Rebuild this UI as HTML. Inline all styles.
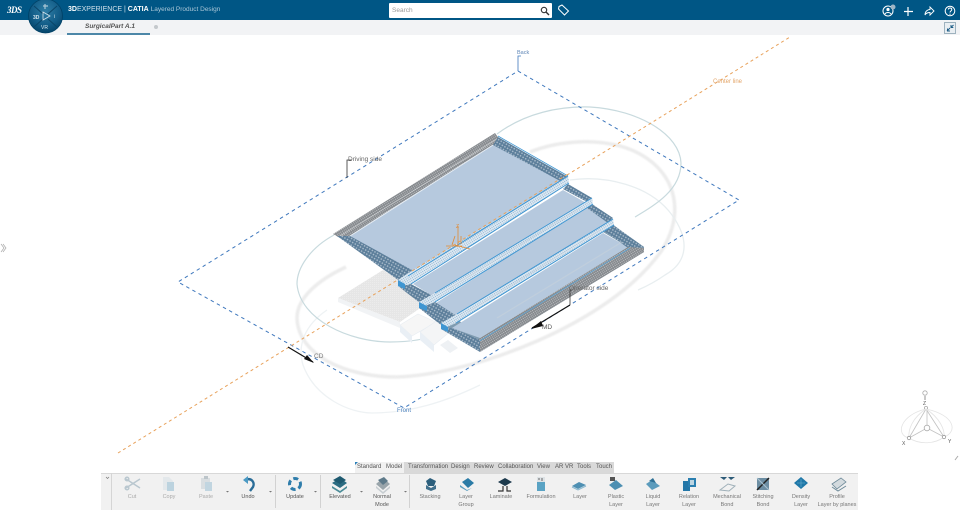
<!DOCTYPE html>
<html><head><meta charset="utf-8"><style>
html,body{margin:0;padding:0;width:960px;height:510px;overflow:hidden;background:#fff;font-family:"Liberation Sans",sans-serif}
.abs{position:absolute}
#top{left:0;top:0;width:960px;height:20px;background:#005685}
#tabs{left:0;top:20px;width:960px;height:15px;background:#f2f3f5}
#tb{left:101px;top:473px;width:757px;height:37px;background:#f1f1f1;border-top:1px solid #d8d8d8;box-sizing:border-box}
.l{position:absolute;font-size:5.5px;color:#777;text-align:center;line-height:7.5px;white-space:nowrap;transform:translateX(-50%)}
.d{color:#555}
.sep{position:absolute;top:475px;width:1px;height:33px;background:#d2d2d2}
.tab{position:absolute;top:462px;height:11px;font-size:6px;line-height:11px;color:#555;text-align:center}
</style></head><body>
<svg class="abs" style="left:0;top:0" width="960" height="510" viewBox="0 0 960 510">
<defs>
<pattern id="m1" width="3" height="3" patternUnits="userSpaceOnUse" patternTransform="rotate(30)"><rect width="3" height="3" fill="#5d7f9b"/><rect width="1.4" height="1.4" fill="#aebfce"/></pattern>
<pattern id="m2" width="2" height="2" patternUnits="userSpaceOnUse" patternTransform="rotate(-31)"><rect width="2" height="2" fill="#85898d"/><rect width="1" height="1" fill="#bfc1c4"/></pattern>
<pattern id="m3" width="2" height="2" patternUnits="userSpaceOnUse" patternTransform="rotate(-31)"><rect width="2" height="2" fill="#dfeaf3"/><rect width="1" height="1" fill="#8fb3d0"/></pattern>
<pattern id="g1" width="2" height="2" patternUnits="userSpaceOnUse"><rect width="2" height="2" fill="#e6e6e6"/><rect width="1" height="1" fill="#ececec"/></pattern>
<filter id="b"><feGaussianBlur stdDeviation=".7"/></filter>
<filter id="b2"><feGaussianBlur stdDeviation=".35"/></filter>
</defs>
<g fill="none">
<!-- gray ring -->
<path d="M346 267C318 280 297 298 297 318C298 355 345 377 397 377C470 375 610 325 662 250C690 205 670 160 620 146C590 138 555 142 530 152" stroke="#ececec" stroke-width="3.5" filter="url(#b)"/>
<!-- pale rings -->
<path d="M327 310C305 325 297 345 303 365C315 398 350 413 372 413C410 413 445 402 480 385" stroke="#eef2f4" stroke-width="1.3" filter="url(#b2)"/>
<path d="M570 180C605 175 650 185 672 215C690 240 688 262 665 275C655 282 645 287 638 290" stroke="#e8eef0" stroke-width="1.3" filter="url(#b2)"/>
<!-- blue ring -->
<path d="M497 134C525 113 560 106 590 107C640 110 680 135 681 163C681 190 655 205 635 217" stroke="#c8dade" stroke-width="1.2" filter="url(#b2)"/>
<path d="M334 235C310 248 297 268 297 284C300 320 350 342 390 342C410 342 428 339 442 333" stroke="#c8dade" stroke-width="1.2" filter="url(#b2)"/>
<!-- dashed -->
<path d="M518 71L739 200L404 408L178 282Z" stroke="#3f78bd" stroke-width="1" stroke-dasharray="3.5 3.5"/>
</g>
<!-- ghost -->
<g filter="url(#b2)">
<polygon points="338,298 383,270 432,300 400,322" fill="url(#g1)"/>
<polygon points="338,298 400,322 400,328 338,302" fill="#f1f3f5"/>
<polygon points="400,325 418,314 436,322 412,336" fill="#f6f6f6" stroke="#e8edf2" stroke-width=".6"/>
<polygon points="400,325 412,336 412,343 400,332" fill="#e9eff5"/>
<polygon points="420,332 438,320 452,330 434,345" fill="#f4f5f6" stroke="#e8edf2" stroke-width=".6"/>
<polygon points="420,332 434,345 434,352 420,340" fill="#e9eff5"/>
<polygon points="440,345 448,340 458,348 450,353" fill="#eef1f4"/>
</g>
<path d="M118 453L790 37" fill="none" stroke="#e8a25c" stroke-width="1" stroke-dasharray="3 3"/>
<!-- plates -->
<g>
<!-- plate 4 -->
<polygon points="444,326 456,318 480,338 628,247 603,232 612,226 644,247 644,252 480,352 478,350" fill="#7f9bb0"/>
<polygon points="452,328 603,233 628,247 480,338" fill="#b6c9de"/>
<polygon points="603,230 612,224 644,247 628,248" fill="url(#m1)"/>
<polygon points="477,340 628,247 644,248 644,252 480,352" fill="url(#m2)"/>
<path d="M478 342L630 248" stroke="#5fa5d5" stroke-width=".8"/>
<polygon points="441,329 452,328 480,340 480,352" fill="url(#m1)"/>
<!-- band 3 + plate 3 -->
<polygon points="436,303 587,206 610,221 457,316" fill="#b6c9de"/>
<polygon points="592,204 613,218 608,223 587,208" fill="url(#m1)"/>
<polygon points="419,308 435,302 457,316 441,325" fill="url(#m1)"/>
<polygon points="441,323 457,314 613,219 614,225 456,323 441,330" fill="url(#m3)"/>
<path d="M456 323L614 225M457 314L613 219" stroke="#3f96d2" stroke-width="1"/>
<polygon points="441,323 448,327 448,332 441,329" fill="#3f96d2"/>
<!-- band 2 + plate 2 -->
<polygon points="413,284 563,190 590,205 436,298" fill="#b6c9de"/>
<polygon points="568,184 592,198 587,202 563,189" fill="url(#m1)"/>
<polygon points="398,286 411,284 435,297 420,303" fill="url(#m1)"/>
<polygon points="419,302 435,293 592,198 593,204 435,302 419,308" fill="url(#m3)"/>
<path d="M435 302L593 204M435 293L592 198" stroke="#3f96d2" stroke-width="1"/>
<polygon points="419,302 427,306 427,311 419,308" fill="#3f96d2"/>
<!-- plate 1 -->
<polygon points="350,236 493,145 568,182 412,274" fill="#b6c9de"/>
<polygon points="333,234 495,133 500,140 493,145 350,236 340,238" fill="url(#m2)"/>
<path d="M350 236L493 145" stroke="#e6edf4" stroke-width="1"/>
<path d="M340 236L497 139" stroke="#d5d8da" stroke-width=".6"/>
<polygon points="498,137 568,177 562,182 493,145" fill="url(#m1)"/>
<path d="M498 136L568 176" stroke="#3f96d2" stroke-width=".8"/>
<polygon points="337,236 350,236 412,270 406,280 398,280" fill="url(#m1)"/>
<polygon points="398,280 408,273 568,176 569,183 411,284 398,287" fill="url(#m3)"/>
<path d="M411 284L569 183M408 276L568 176" stroke="#3f96d2" stroke-width="1"/>
<polygon points="398,280 405,284 405,289 398,286" fill="#3f96d2"/>
<path d="M445 291L580 208M468 312L600 230M497 318L622 242" stroke="#c7d2dc" stroke-width="1.2" opacity=".6"/>
</g>
<g fill="none">
<path d="M412 271L568 174" stroke="#e8a25c" stroke-width="1" stroke-dasharray="3 3"/>
<path d="M458 247V226M461 244V236M455 245L470 249M446 246H462M452 245L455 236" stroke="#e08a35" stroke-width=".8"/>
<path d="M347 178V160H352M570 305V290H572" stroke="#333" stroke-width=".8"/>
<path d="M518 71V56H521" stroke="#3f78bd" stroke-width=".8"/>
<path d="M570 305L532 328" stroke="#111" stroke-width="1.2"/>
<path d="M288 347L313 362" stroke="#111" stroke-width="1.2"/>
</g>
<polygon points="531,329 541,321 543,326" fill="#111"/>
<polygon points="314,363 304,359 307,355" fill="#111"/>
<path d="M1 244L4 248L1 252M3 244L6 248L3 252" fill="none" stroke="#aaa" stroke-width=".7"/>
<text x="348" y="161" font-size="6.5" fill="#666">Driving side</text>
<text x="517" y="54" font-size="5.5" fill="#5f86b6">Back</text>
<text x="713" y="83" font-size="6" fill="#e3a569">Center line</text>
<text x="569" y="290" font-size="6.5" fill="#666">Operator side</text>
<text x="542" y="329" font-size="6.5" fill="#555">MD</text>
<text x="314" y="358" font-size="6.5" fill="#777">CD</text>
<text x="397" y="412" font-size="6" fill="#4b80bd">Front</text>
<text x="456" y="228" font-size="5" fill="#e08a35">Z</text>
<!-- compass -->
<g fill="none" stroke="#c5c5c5" stroke-width=".8">
<circle cx="925" cy="393" r="2.2" stroke="#aaa"/>
<path d="M925 396V400" stroke="#777"/>
<circle cx="926" cy="408" r="1.6" stroke="#aaa"/>
<path d="M926 409L909 438M926 409L944 437M927 428L909 438M927 428L944 437M927 409V425" stroke="#c2c2c2"/>
<circle cx="927" cy="428" r="2.8" stroke="#aaa" fill="#fff"/>
<path d="M926 409C900 415 895 435 909 438M926 409C955 415 958 432 944 437M926 409C912 418 908 430 909 438M926 409C940 418 945 430 944 437M909 438C920 445 935 444 944 437" stroke="#e4e4e4"/>
<circle cx="909" cy="438" r="1.7" stroke="#999" fill="#fff"/><circle cx="944" cy="437" r="1.7" stroke="#999" fill="#fff"/>
</g>
<text x="923" y="405" font-size="5" fill="#555">Z</text>
<text x="902" y="445" font-size="5" fill="#555">X</text>
<text x="948" y="443" font-size="5" fill="#555">Y</text>
<path d="M955 460L958 456" stroke="#aaa" stroke-width="1"/>
</svg>

<div class="abs" id="top"></div>
<div class="abs" id="tabs"></div>
<div class="abs" style="left:67px;top:33px;width:83px;height:2px;background:#4d87a8"></div>
<div class="abs" style="left:85px;top:23px;font-size:6.5px;font-weight:bold;font-style:italic;color:#555;white-space:nowrap">SurgicalPart A.1</div>
<div class="abs" style="left:154px;top:25px;width:4px;height:4px;border-radius:50%;background:#c4c8cc"></div>

<div class="abs" style="left:68px;top:5px;font-size:7px;line-height:10px;color:#cfe0ea;white-space:nowrap"><b style="color:#fff">3D</b>EXPERIENCE | <b style="color:#fff">CATIA</b> <span style="font-size:6.5px;color:#a9c6d7">Layered Product Design</span></div>
<div class="abs" style="left:7px;top:4px;width:16px;font-size:9px;font-style:italic;font-weight:bold;color:#fff;font-family:'Liberation Serif',serif;line-height:12px;letter-spacing:-.5px;white-space:nowrap">3DS</div>

<!-- compass -->
<svg class="abs" style="left:26px;top:0" width="40" height="35" viewBox="0 0 40 35">
<defs><radialGradient id="g" cx=".5" cy=".35" r=".7"><stop offset="0" stop-color="#2f7ea6"/><stop offset=".6" stop-color="#125c87"/><stop offset="1" stop-color="#023f63"/></radialGradient></defs>
<circle cx="19.5" cy="16" r="17" fill="url(#g)" stroke="#004166" stroke-width=".8"/>
<path d="M8 6L17 14M31 6L22 14M8 27L17 19M31 27L22 19" stroke="#0a4568" stroke-width="1"/>
<path d="M17 12L24 16L17 20Z" fill="none" stroke="#d5e4ec" stroke-width=".8"/>
<path d="M17 6h5M19 4v5" stroke="#aac5d4" stroke-width="1.2"/>
<text x="7" y="19" font-size="5" fill="#d5e4ec" font-weight="bold">3D</text>
<text x="28" y="18" font-size="5" fill="#d5e4ec">i</text>
<text x="15" y="29" font-size="5" fill="#d5e4ec">VR</text>
</svg>

<!-- search -->
<div class="abs" style="left:389px;top:3px;width:163px;height:15px;background:#fff;border-radius:1px"></div>
<div class="abs" style="left:392px;top:6px;font-size:6.5px;line-height:9px;color:#999">Search</div>
<svg class="abs" style="left:0;top:0" width="960" height="35" viewBox="0 0 960 35" fill="none">
<circle cx="544" cy="10" r="2.7" stroke="#333" stroke-width="1.1"/><path d="M546 12L549 15" stroke="#333" stroke-width="1.4"/>
<path d="M559 6.5L562 5L568.5 11L564.5 15L558.5 9Z" stroke="#fff" stroke-width="1"/>
<circle cx="888" cy="11" r="5" stroke="#fff" stroke-width="1"/><circle cx="888" cy="9.5" r="1.6" fill="#fff"/><path d="M885 14C886 12 890 12 891 14" stroke="#fff"/>
<circle cx="893" cy="7" r="2.5" fill="#9fb6c6"/>
<path d="M908 7V16M904 11.5H913" stroke="#fff" stroke-width="1.2"/>
<path d="M925 15C925 11 928 9.5 930 9.5V7L934 11L930 15V12.5C928 12.5 926 13 925 15Z" stroke="#fff" stroke-width=".9"/>
<circle cx="950" cy="11" r="4.8" stroke="#fff" stroke-width="1"/><path d="M948.3 9.5C948.5 7.5 951.7 7.5 951.8 9.5C951.8 11 950 11 950 12.5" stroke="#fff" stroke-width="1"/><circle cx="950" cy="14.2" r=".6" fill="#fff"/>
<rect x="944.5" y="22.5" width="11" height="11" fill="#e9eef2" stroke="#7d97a8" stroke-width=".7"/>
<path d="M947 31L950 28M947.5 28.5V31H950M953.5 25L950.8 27.7M953.3 27.5H951V25" stroke="#1e5d86" stroke-width="1"/>
</svg>

<!-- toolbar -->
<div class="abs" id="tb"></div>
<div class="abs" style="left:101px;top:473px;width:11px;height:37px;border-right:1px solid #d5d5d5;box-sizing:border-box"></div>
<div class="abs" style="left:355px;top:462px;width:259px;height:11px;background:#d9d9d9"></div>
<div class="abs" style="left:355px;top:462px;width:49px;height:11px;background:#f1f1f1"></div>
<div class="abs" style="left:355px;top:462px;width:0;height:0;border-top:3px solid #2b7fb8;border-right:3px solid transparent"></div>
<div class="tab" style="left:357px">Standard</div><div class="tab" style="left:386px">Model</div>
<div class="tab" style="left:408px">Transformation</div><div class="tab" style="left:451px">Design</div><div class="tab" style="left:474px">Review</div>
<div class="tab" style="left:498px">Collaboration</div><div class="tab" style="left:537px">View</div><div class="tab" style="left:555px">AR VR</div>
<div class="tab" style="left:577px">Tools</div><div class="tab" style="left:596px">Touch</div>

<div class="sep" style="left:275px"></div><div class="sep" style="left:320px"></div><div class="sep" style="left:409px"></div>

<svg class="abs" style="left:0;top:470px" width="960" height="40" viewBox="0 470 960 40">
<path d="M106 477l1.5 1.5 1.5-1.5" fill="none" stroke="#777" stroke-width=".7"/>
<g fill="#777"><path d="M226 491h3l-1.5 1.5zM269 491h3l-1.5 1.5zM314 491h3l-1.5 1.5zM360 491h3l-1.5 1.5zM404 491h3l-1.5 1.5z"/></g>
<!-- cut -->
<g fill="none" stroke="#b9c7cf" stroke-width="1.5"><path d="M126 479L140 488M126 488L140 479"/><circle cx="127" cy="479" r="1.8"/><circle cx="127" cy="488" r="1.8"/></g>
<!-- copy -->
<path d="M163 477h6l4 4v9h-10z" fill="#e3e8eb"/><path d="M167 482h7v9h-7z" fill="#bcd3df"/>
<!-- paste -->
<rect x="201" y="478" width="9" height="11" fill="#d9dee1"/><rect x="204" y="476" width="4" height="3" fill="#bcc5ca"/><rect x="205" y="482" width="7" height="9" fill="#c1d5e0"/>
<!-- undo -->
<path d="M245 480C252 477 255 483 253 487L250 491" fill="none" stroke="#2a6d98" stroke-width="2.4"/><path d="M243 480L248 476V484Z" fill="#4b9ac4"/>
<!-- update -->
<circle cx="295" cy="484" r="5.5" fill="none" stroke="#2f7dab" stroke-width="3" stroke-dasharray="5 3"/>
<!-- elevated -->
<path d="M332 483L340 478L347 483L340 488Z" fill="#2b6c82"/><path d="M332 486L340 491L347 486V488L340 493L332 488Z" fill="#4c8c98"/><path d="M333 480L340 476L346 480L340 484Z" fill="#1e5a70"/>
<!-- normal -->
<path d="M376 484L383 478L390 484L383 490Z" fill="#9aa5ab"/><path d="M376 486L383 492L390 486V488L383 494L376 488Z" fill="#c6ccd0"/><path d="M378 480L384 477L388 481L383 485Z" fill="#5e7a8a"/>
<!-- stacking etc -->
<g><path d="M426 481L430 478L436 481L434 486L428 486Z" fill="#2c5f7c"/><path d="M426 485L431 488L436 485V489L431 491L426 489Z" fill="#41708c"/>
<path d="M462 482L468 478L474 483L468 488Z" fill="#2a7ba6"/><path d="M460 485L467 490L472 488L467 491L460 487Z" fill="#5c9fc0"/>
<path d="M498 482L505 478L512 482L505 486Z" fill="#1d3a4d"/><path d="M503 486V491H498M507 486V491H511" stroke="#333" stroke-width="1.2" fill="none"/>
<rect x="537" y="482" width="8" height="9" fill="#5aa3c4"/><rect x="537" y="477" width="8" height="5" fill="#dde2e5"/><path d="M538 479h2M542 478v3" stroke="#666"/>
<path d="M572 486L579 482L586 485L578 489Z" fill="#4f90b3"/><path d="M572 487L578 490L586 486" stroke="#89b7cf" fill="none"/>
<rect x="610" y="477" width="5" height="4" fill="#555"/><path d="M609 485L616 480L623 486L615 490Z" fill="#4d8fb2"/>
<path d="M646 484L652 480L660 486L652 490Z" fill="#5b9bbc"/><path d="M649 481L653 478L656 483Z" fill="#2e7196"/>
<rect x="683" y="481" width="7" height="10" fill="#2477a8"/><rect x="688" y="478" width="8" height="9" fill="#2b7fb0"/><rect x="690" y="480" width="4" height="5" fill="#bcd5e2"/>
<path d="M720 477L724 480L727 477ZM728 477L731 480L735 477Z" fill="#2d5b78"/><path d="M720 490L728 484L735 486L729 491Z" fill="none" stroke="#9fb0b9"/>
<rect x="757" y="478" width="12" height="12" fill="#6d8ea3"/><path d="M757 490L769 478" stroke="#222" stroke-width="1.5"/><path d="M757 478L769 490" stroke="#a9c2d0"/>
<path d="M794 483L801 477L808 483L801 489Z" fill="#1f78a8"/><path d="M797 483H805M801 479V487" stroke="#6db0d0" stroke-width=".6"/>
<path d="M832 484L841 478L846 482L837 489Z" fill="#d3dade" stroke="#6e8a99" stroke-width=".8"/><path d="M832 487L838 491L846 486" stroke="#6e8a99" fill="none"/></g>
</svg>

<div class="l" style="left:132px;top:494px;color:#aaa">Cut</div>
<div class="l" style="left:169px;top:494px;color:#aaa">Copy</div>
<div class="l" style="left:206px;top:494px;color:#aaa">Paste</div>
<div class="l d" style="left:248px;top:494px">Undo</div>
<div class="l d" style="left:295px;top:494px">Update</div>
<div class="l d" style="left:340px;top:494px">Elevated</div>
<div class="l d" style="left:382px;top:494px">Normal<br>Mode</div>
<div class="l" style="left:430px;top:494px">Stacking</div>
<div class="l" style="left:466px;top:494px">Layer<br>Group</div>
<div class="l" style="left:501px;top:494px">Laminate</div>
<div class="l" style="left:541px;top:494px">Formulation</div>
<div class="l" style="left:580px;top:494px">Layer</div>
<div class="l" style="left:616px;top:494px">Plastic<br>Layer</div>
<div class="l" style="left:653px;top:494px">Liquid<br>Layer</div>
<div class="l" style="left:689px;top:494px">Relation<br>Layer</div>
<div class="l" style="left:727px;top:494px">Mechanical<br>Bond</div>
<div class="l" style="left:763px;top:494px">Stitching<br>Bond</div>
<div class="l" style="left:801px;top:494px">Density<br>Layer</div>
<div class="l" style="left:837px;top:494px">Profile<br>Layer by planes</div>
</body></html>
